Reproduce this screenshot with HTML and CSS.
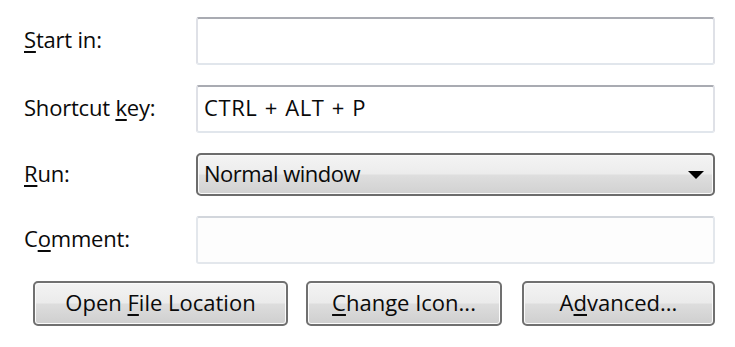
FILE: index.html
```html
<!DOCTYPE html>
<html>
<head>
<meta charset="utf-8">
<link rel="stylesheet" href="styles.css">
</head>
<body>
<div class="dialog">
  <div class="form">
    <label class="lbl"><u>S</u>tart in:</label>
    <div class="field"></div>

    <label class="lbl">Shortcut <u>k</u>ey:</label>
    <div class="field"><span class="val wide">CTRL + ALT + P</span></div>

    <label class="lbl"><u>R</u>un:</label>
    <div class="combo">
      <span class="val">Normal window</span>
      <svg class="arrow" width="16" height="8" viewBox="0 0 16 8"><path d="M0 0H16L8 8Z" fill="#000"/></svg>
    </div>

    <label class="lbl">C<u>o</u>mment:</label>
    <div class="field faint"></div>
  </div>
  <div class="buttons">
    <div class="btn b1"><span>Open <u>F</u>ile Location</span></div>
    <div class="btn b2"><span><u>C</u>hange Icon...</span></div>
    <div class="btn b3"><span>A<u>d</u>vanced...</span></div>
  </div>
</div>
</body>
</html>
```
FILE: styles.css
```css
html, body {
  margin: 0;
  padding: 0;
  background: #ffffff;
  width: 735px;
  height: 347px;
  overflow: hidden;
}
.dialog {
  font-family: "Open Sans", "Noto Sans", sans-serif;
  font-size: 22px;
  color: #0a0a0a;
  padding: 17px 20px 0 24px;
}
.form {
  display: grid;
  grid-template-columns: 172px 519px;
  grid-template-rows: 48px 48px 43px 48px;
  row-gap: 20px;
  align-items: center;
}
.lbl {
  display: block;
  line-height: 1;
  margin-top: -4px;
  letter-spacing: -0.2px;
}
u {
  text-decoration-thickness: 2px;
  text-underline-offset: 3px;
}
.field {
  box-sizing: border-box;
  height: 48px;
  border: 2px solid #e1e6ec;
  border-top-color: #a9abb2;
  border-left-color: #dfe1e7;
  border-right-color: #dfe1e7;
  border-radius: 3px;
  background: #fff;
  display: flex;
  align-items: center;
  padding-left: 6px;
}
.field.faint {
  border-color: #e3e7ec;
  border-top-color: #d2d6dc;
  background: #fdfdfd;
}
.val {
  line-height: 1;
  margin-top: -4px;
}
.val.wide {
  letter-spacing: 0.6px;
  word-spacing: 1px;
}
.combo {
  box-sizing: border-box;
  height: 43px;
  border: 2px solid #6c6c6c;
  border-radius: 5px;
  background: linear-gradient(#f4f4f4 0%, #ececec 48%, #dedede 52%, #d1d1d1 100%);
  box-shadow: inset 0 0 0 1px #fafafa;
  display: flex;
  align-items: center;
  justify-content: space-between;
  padding: 0 9px 0 6px;
}
.combo .val {
  letter-spacing: -0.5px;
}
.buttons {
  display: flex;
  margin-top: 17px;
  padding-left: 9px;
}
.btn {
  box-sizing: border-box;
  height: 45px;
  border: 2px solid #707070;
  border-radius: 5px;
  background: linear-gradient(#f3f3f3 0%, #ebebeb 48%, #dddddd 52%, #cfcfcf 100%);
  box-shadow: inset 0 0 0 1px #fbfbfb;
  display: flex;
  align-items: center;
  justify-content: center;
  line-height: 1;
  padding-bottom: 4px;
}
.b1 { width: 255px; }
.b2 { width: 196px; margin-left: 18px; }
.b3 { width: 193px; margin-left: 20px; }
```
